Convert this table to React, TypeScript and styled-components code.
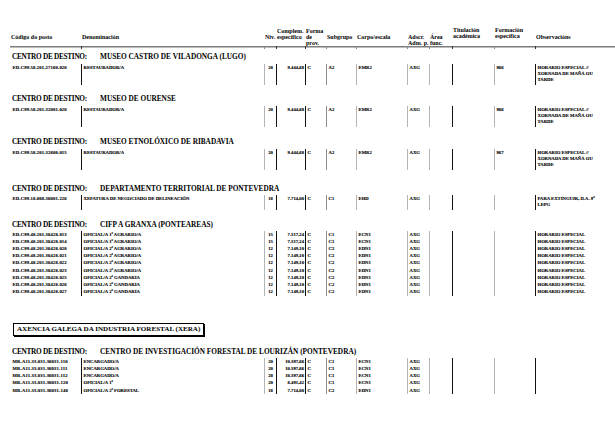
import React from 'react';
import styled, { createGlobalStyle } from 'styled-components';

const SERIF = '"Liberation Serif", "Times New Roman", "DejaVu Serif", serif';

const Global = createGlobalStyle`
  html, body { margin: 0; padding: 0; background: #ffffff; }
  body { font-family: ${SERIF}; color: #000; }
`;

const COLS = '71px 183px 12px 29px 21px 30px 51px 22px 23px 42px 41px 72px';

type Line = 'none' | 'black' | 'gray' | 'light';
type Align = 'left' | 'right' | 'center';

const COL_SPEC: { line: Line; align: Align }[] = [
  { line: 'none', align: 'left' },
  { line: 'black', align: 'left' },
  { line: 'light', align: 'center' },
  { line: 'black', align: 'right' },
  { line: 'black', align: 'left' },
  { line: 'gray', align: 'left' },
  { line: 'light', align: 'left' },
  { line: 'light', align: 'left' },
  { line: 'light', align: 'left' },
  { line: 'black', align: 'left' },
  { line: 'light', align: 'left' },
  { line: 'black', align: 'left' },
];

const lineColor = (l: Line) =>
  l === 'black' ? '#111' : l === 'gray' ? '#8c8c8c' : l === 'light' ? '#b4b4b4' : 'transparent';

const Page = styled.div`
  width: 615px;
  height: 439px;
  box-sizing: border-box;
  padding: 27px 0 0 10px;
  overflow: hidden;
  font-family: ${SERIF};
  color: #000;
`;

const HeadGrid = styled.div`
  display: grid;
  grid-template-columns: ${COLS};
  font-size: 6px;
  font-weight: bold;
  line-height: 6px;
`;

const HeadCell = styled.div<{ $top: number }>`
  padding-top: ${(p) => p.$top}px;
  padding-left: 1px;
  white-space: nowrap;
`;

const Rule = styled.div`
  display: grid;
  grid-template-columns: ${COLS};
  height: 3px;
  background: linear-gradient(#7c7c7c, #7c7c7c) 0 0 / 100% 1.5px no-repeat;
`;

const Tick = styled.div<{ $line: Line }>`
  border-left: 1px solid ${(p) => (p.$line === 'none' ? 'transparent' : p.$line === 'black' ? '#333' : '#888')};
`;

const SectionTitle = styled.div<{ $mt: number }>`
  margin-top: ${(p) => p.$mt}px;
  display: flex;
  font-size: 7.3px;
  font-weight: bold;
  line-height: 9px;
  padding-left: 2px;
  white-space: nowrap;
`;

const TitleLabel = styled.span`
  flex: none;
  width: 88px;
  letter-spacing: -0.3px;
`;

const Rows = styled.div<{ $mt: number }>`
  margin-top: ${(p) => p.$mt}px;
  display: flex;
  flex-direction: column;
`;

const Row = styled.div<{ $pt: number; $pb: number }>`
  display: grid;
  grid-template-columns: ${COLS};
  font-size: 4.7px;
  font-weight: bold;
  line-height: 6px;
  -webkit-text-stroke: 0.12px #000;
  --pt: ${(p) => p.$pt}px;
  --pb: ${(p) => p.$pb}px;
`;

const Cell = styled.div<{ $line: Line; $align: Align; $code?: boolean }>`
  border-left: 1px solid ${(p) => lineColor(p.$line)};
  text-align: ${(p) => p.$align};
  padding: var(--pt) ${(p) => (p.$align === 'right' ? '1px' : '0')} var(--pb)
    ${(p) => (p.$align === 'left' ? '1.5px' : '0')};
  letter-spacing: ${(p) => (p.$code ? '0.15px' : '0')};
  white-space: nowrap;
`;

const AgencyBox = styled.div<{ $mt: number }>`
  margin: ${(p) => p.$mt}px 0 0 3px;
  width: fit-content;
  border: 1px solid #000;
  box-shadow: 1px 1px 0 #000;
  padding: 1px 3px;
  font-size: 7.1px;
  font-weight: bold;
  line-height: 9px;
  white-space: nowrap;
`;

type RowData = [string, string, string, string, string, string, string, string, string, string, string, string[]];

type Section = {
  kind: 'section';
  name: string;
  mt: number;
  pt: number;
  pb: number;
  rows: RowData[];
};
type Agency = { kind: 'agency'; name: string; mt: number };

const ESP3 = ['HORARIO ESPECIAL //', 'XORNADA DE MAÑÁ OU', 'TARDE'];
const HE = ['HORARIO ESPECIAL'];

const cifp = (n: string, d: string, niv: string, c: string, sg: string, ce: string): RowData => [
  `ED.C99.48.201.36428.${n}`, d, niv, c, 'C', sg, ce, 'AXG', '', '', '', HE,
];
const mr = (n: string, d: string, niv: string, c: string, sg: string, ce: string): RowData => [
  `MR.A11.33.031.36031.${n}`, d, niv, c, 'C', sg, ce, 'AXG', '', '', '', [],
];

const BLOCKS: (Section | Agency)[] = [
  {
    kind: 'section', name: 'MUSEO CASTRO DE VILADONGA (LUGO)', mt: 3, pt: 1, pb: 2,
    rows: [['ED.C99.58.201.27160.020', 'RESTAURADOR/A', '20', '9.444,68', 'C', 'A2', 'EMR2', 'AXG', '', '', '966', ESP3]],
  },
  {
    kind: 'section', name: 'MUSEO DE OURENSE', mt: 9.5, pt: 1, pb: 2,
    rows: [['ED.C99.58.201.32001.020', 'RESTAURADOR/A', '20', '9.444,68', 'C', 'A2', 'EMR2', 'AXG', '', '', '966', ESP3]],
  },
  {
    kind: 'section', name: 'MUSEO ETNOLÓXICO DE RIBADAVIA', mt: 10.5, pt: 1, pb: 2,
    rows: [['ED.C99.58.201.32600.015', 'RESTAURADOR/A', '20', '9.444,68', 'C', 'A2', 'EMR2', 'AXG', '', '', '967', ESP3]],
  },
  {
    kind: 'section', name: 'DEPARTAMENTO TERRITORIAL DE PONTEVEDRA', mt: 14, pt: 1, pb: 2,
    rows: [['ED.C99.18.008.36001.226', 'XEFATURA DE NEGOCIADO DE DELINEACIÓN', '18', '7.714,00', 'C', 'C1', 'EHD', 'AXG', '', '', '', ['PARA EXTINGUIR, D.A. 9ª', 'LEPG']]],
  },
  {
    kind: 'section', name: 'CIFP A GRANXA (PONTEAREAS)', mt: 9.5, pt: 0.6, pb: 0.6,
    rows: [
      cifp('013', 'OFICIAL/A 1ª AGRARIO/A', '15', '7.317,24', 'C1', 'ECN1'),
      cifp('014', 'OFICIAL/A 1ª AGRARIO/A', '15', '7.317,24', 'C1', 'ECN1'),
      cifp('020', 'OFICIAL/A 2ª AGRARIO/A', '12', '7.149,10', 'C2', 'EDN1'),
      cifp('021', 'OFICIAL/A 2ª AGRARIO/A', '12', '7.149,10', 'C2', 'EDN1'),
      cifp('022', 'OFICIAL/A 2ª AGRARIO/A', '12', '7.149,10', 'C2', 'EDN1'),
      cifp('023', 'OFICIAL/A 2ª AGRARIO/A', '12', '7.149,10', 'C2', 'EDN1'),
      cifp('025', 'OFICIAL/A 2ª GANDARÍA', '12', '7.149,10', 'C2', 'EDN1'),
      cifp('026', 'OFICIAL/A 2ª GANDARÍA', '12', '7.149,10', 'C2', 'EDN1'),
      cifp('027', 'OFICIAL/A 2ª GANDARÍA', '12', '7.149,10', 'C2', 'EDN1'),
    ],
  },
  { kind: 'agency', name: 'AXENCIA GALEGA DA INDUSTRIA FORESTAL (XERA)', mt: 27 },
  {
    kind: 'section', name: 'CENTRO DE INVESTIGACIÓN FORESTAL DE LOURIZÁN (PONTEVEDRA)', mt: 11, pt: 0.6, pb: 0.6,
    rows: [
      mr('110', 'ENCARGADO/A', '20', '10.397,66', 'C1', 'ECN1'),
      mr('111', 'ENCARGADO/A', '20', '10.397,66', 'C1', 'ECN1'),
      mr('112', 'ENCARGADO/A', '20', '10.397,66', 'C1', 'ECN1'),
      mr('120', 'OFICIAL/A 1ª', '20', '8.491,42', 'C1', 'ECN1'),
      mr('140', 'OFICIAL/A 2ª FORESTAL', '18', '7.714,00', 'C2', 'EDN1'),
    ],
  },
];

const HEADERS: { top: number; lines: string[] }[] = [
  { top: 7, lines: ['Código do posto'] },
  { top: 7, lines: ['Denominación'] },
  { top: 7, lines: ['Niv.'] },
  { top: 1, lines: ['Complem.', 'específico'] },
  { top: 1, lines: ['Forma', 'de', 'prov.'] },
  { top: 7, lines: ['Subgrupo'] },
  { top: 7, lines: ['Corpo/escala'] },
  { top: 7, lines: ['Adscr.', 'Adm. p.'] },
  { top: 7, lines: ['Área', 'func.'] },
  { top: 0, lines: ['Titulación', 'académica'] },
  { top: 0, lines: ['Formación', 'específica'] },
  { top: 7, lines: ['Observacións'] },
];

function DataRow({ data, pt, pb }: { data: RowData; pt: number; pb: number }) {
  return (
    <Row $pt={pt} $pb={pb}>
      {COL_SPEC.map((spec, i) => {
        const v = data[i];
        return (
          <Cell key={i} $line={spec.line} $align={spec.align} $code={i === 0}>
            {Array.isArray(v) ? v.map((l, j) => <div key={j}>{l}</div>) : v}
          </Cell>
        );
      })}
    </Row>
  );
}

export default function App() {
  return (
    <>
      <Global />
      <Page>
        <HeadGrid>
          {HEADERS.map((h, i) => (
            <HeadCell key={i} $top={h.top}>
              {h.lines.map((l, j) => (
                <div key={j}>{l}</div>
              ))}
            </HeadCell>
          ))}
        </HeadGrid>
        <Rule>
          {COL_SPEC.map((s, i) => (
            <Tick key={i} $line={i === 0 ? 'none' : s.line} />
          ))}
        </Rule>
        {BLOCKS.map((b, i) =>
          b.kind === 'agency' ? (
            <AgencyBox key={i} $mt={b.mt}>{b.name}</AgencyBox>
          ) : (
            <React.Fragment key={i}>
              <SectionTitle $mt={b.mt}>
                <TitleLabel>CENTRO DE DESTINO:</TitleLabel>
                <span>{b.name}</span>
              </SectionTitle>
              <Rows $mt={2.5}>
                {b.rows.map((r, j) => (
                  <DataRow key={j} data={r} pt={b.pt} pb={b.pb} />
                ))}
              </Rows>
            </React.Fragment>
          )
        )}
      </Page>
    </>
  );
}
